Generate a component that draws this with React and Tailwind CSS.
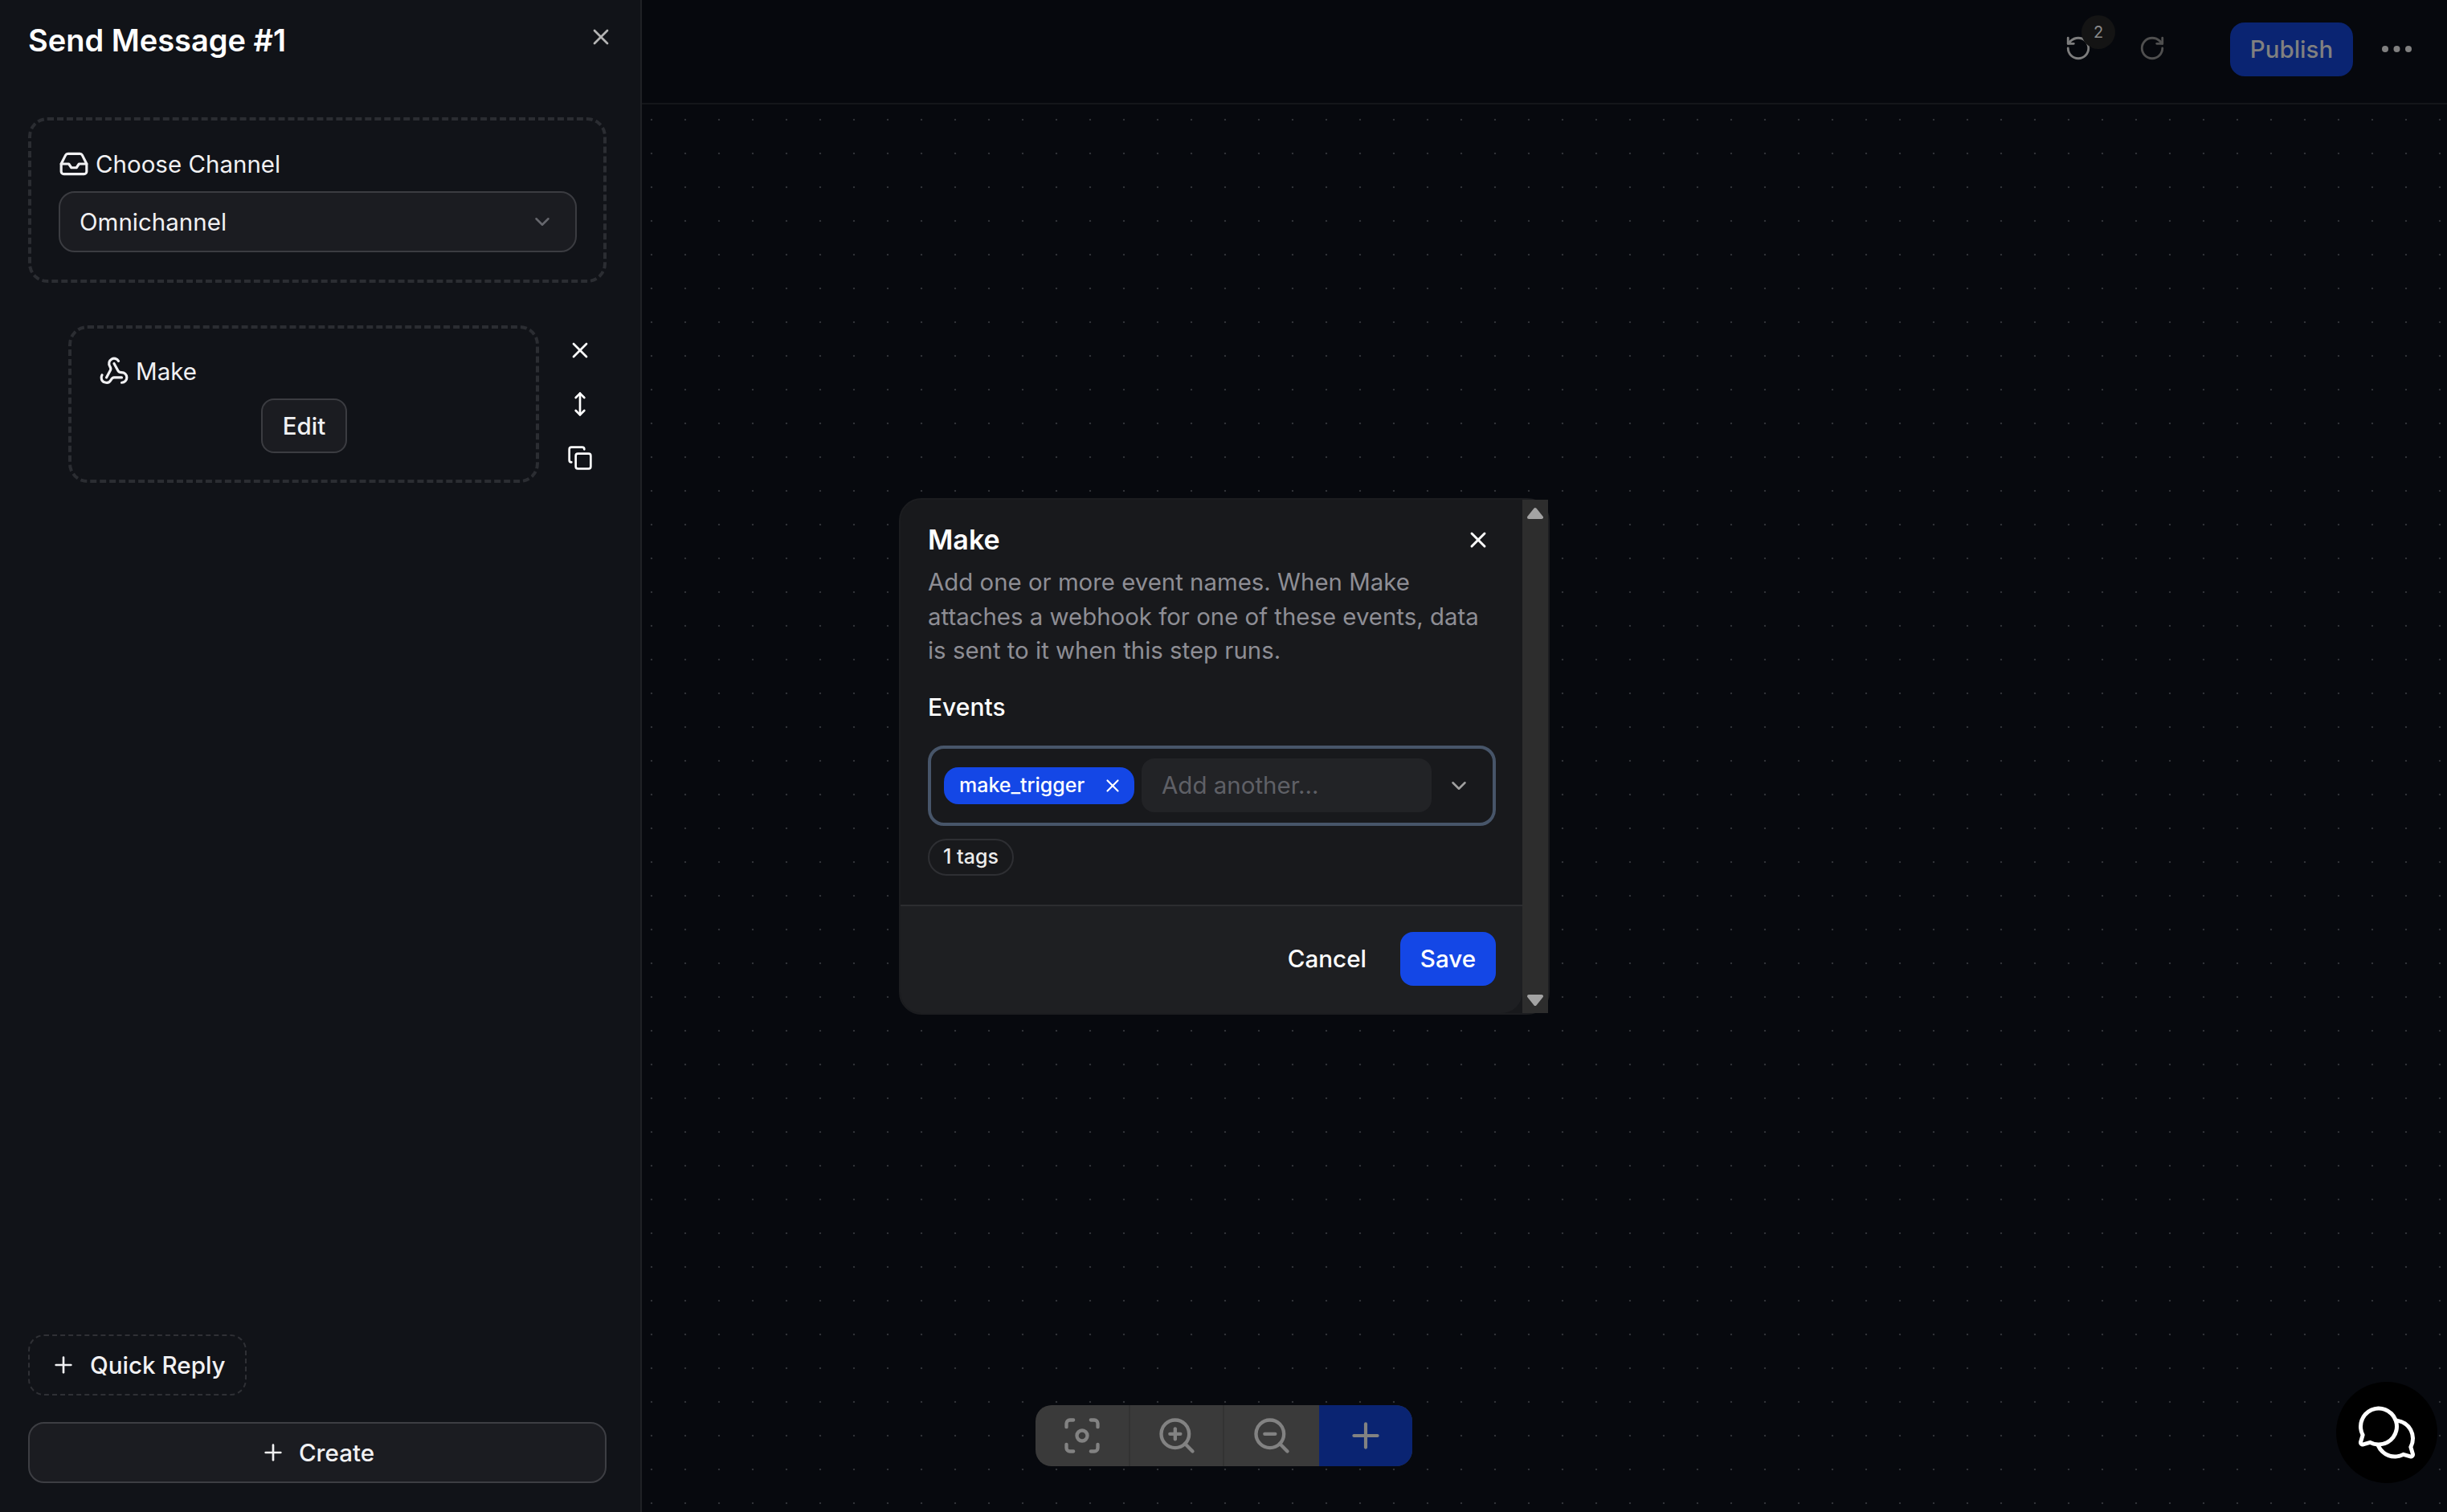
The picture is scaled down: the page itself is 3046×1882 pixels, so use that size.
import { Inbox, ChevronDown, Webhook, X, MoveVertical, Copy, Plus, RotateCcw, RotateCw, Focus, ZoomIn, ZoomOut } from 'lucide-react'
import { PiChatsCircle } from 'react-icons/pi'

function Sidebar() {
  return (
    <aside className="w-[799px] h-full shrink-0 flex flex-col bg-[#111318] border-r-2 border-[#1f2125] pl-[35px] pr-[42px] text-[#f1f1f3]">
      <div className="h-[146px] shrink-0 flex justify-between">
        <h1 className="mt-[28px] text-[38px] leading-[44px] font-semibold text-white">Send Message #1</h1>
        <X size={32} strokeWidth={2} className="mt-[30px] mr-[-9px] text-[#b4b4b4]" />
      </div>

      {/* Channel */}
      <div className="w-[720px] h-[206px] shrink-0 border-4 border-dashed border-[#2b2d32] rounded-[24px] pl-[34px] pr-[33px] pt-[34px]">
        <div className="flex items-center gap-[8px] h-[40px] text-[29.5px] leading-[40px]">
          <Inbox size={38} strokeWidth={2} />
          <span>Choose Channel</span>
        </div>
        <div className="mt-[14px] h-[76px] flex items-center justify-between bg-[#1b1c21] border-2 border-[#3b3c41] rounded-[20px] pl-[24px] pr-[26px] text-[29.5px]">
          <span>Omnichannel</span>
          <ChevronDown size={30} className="text-[#66676d]" />
        </div>
      </div>

      {/* Step */}
      <div className="mt-[53px] flex items-start">
        <div className="ml-[50px] w-[586px] h-[196px] shrink-0 border-4 border-dashed border-[#2b2d32] rounded-[24px] pt-[31px] flex flex-col">
          <div className="pl-[34px] flex items-center gap-[8px] h-[44px] text-[29.5px]">
            <Webhook size={38} strokeWidth={2} />
            <span>Make</span>
          </div>
          <button className="self-center mt-[12px] ml-[1px] w-[107px] h-[68px] bg-[#1b1c21] border-2 border-[#3b3c41] rounded-[16px] text-[29.5px] font-medium">Edit</button>
        </div>
        <div className="ml-[35px] pt-[15px] flex flex-col gap-[35px] text-white">
          <X size={32} />
          <MoveVertical size={32} />
          <Copy size={32} />
        </div>
      </div>

      <div className="mt-auto w-[272px] h-[76px] flex items-center gap-[17px] pl-[26px] border-2 border-dashed border-[#2f3035] rounded-[20px] text-[29.6px] font-medium">
        <Plus size={32} strokeWidth={2} />
        <span>Quick Reply</span>
      </div>
      <button className="mt-[33px] mb-[36px] w-[720px] h-[76px] shrink-0 flex items-center justify-center gap-[16px] bg-[#1b1c21] border-2 border-[#3d3e43] rounded-[20px] text-[29.6px] font-medium">
        <Plus size={32} strokeWidth={2} />
        <span>Create</span>
      </button>
    </aside>
  )
}

function Topbar() {
  return (
    <header className="h-[130px] shrink-0 flex items-start justify-end border-b-2 border-[#14161a] bg-[#06080d]">
      <div className="relative mt-[43px] text-[#7d7d7d]">
        <RotateCcw size={34} strokeWidth={2} />
        <span className="absolute left-[21px] top-[-24px] w-[42px] h-[42px] flex items-center justify-center rounded-full bg-[#141414] text-[20px] text-[#8a8a8a]">2</span>
      </div>
      <RotateCw size={34} strokeWidth={2} className="mt-[43px] ml-[58px] text-[#4f4f4f]" />
      <button className="mt-[28px] ml-[80px] w-[153px] h-[67px] rounded-[18px] bg-[#0a2472] text-[29.5px] font-medium text-[#808080]">Publish</button>
      <svg width="37" height="8" viewBox="0 0 37 8" className="mt-[57px] ml-[36px] mr-[44px] text-[#808080]" fill="currentColor">
        <circle cx="4" cy="4" r="4" />
        <circle cx="18.5" cy="4" r="4" />
        <circle cx="33" cy="4" r="4" />
      </svg>
    </header>
  )
}

function MakeDialog() {
  return (
    <div className="absolute left-[320px] top-[490px] w-[810px] h-[643px] flex border-2 border-[#1c1d20] rounded-[28px] text-white bg-[#18191c]">
      <div className="flex-1 flex flex-col rounded-[26px] overflow-hidden">
        <div className="h-[504px] pl-[34px] pr-[33px] pt-[28px]">
          <div className="flex items-center justify-between h-[44px]">
            <h2 className="text-[34px] font-semibold leading-[44px]">Make</h2>
            <X size={32} strokeWidth={2.2} className="mr-[6px]" />
          </div>
          <p className="mt-[10px] text-[29.4px] leading-[42.5px] text-[#8e8e95]">Add one or more event names. When Make attaches a webhook for one of these events, data is sent to it when this step runs.</p>
          <div className="mt-[28px] text-[30px] leading-[40px] font-medium">Events</div>
          <div className="mt-[28px] w-[707px] h-[100px] flex items-center border-4 border-[#475569] rounded-[20px] pl-[16px]">
            <span className="h-[46px] w-[237px] flex items-center justify-between pl-[19px] pr-[14px] rounded-[18px] bg-[#1447e6] text-[25px] font-medium">
              make_trigger
              <X size={26} strokeWidth={2} />
            </span>
            <div className="ml-[9px] h-[67px] w-[361px] flex items-center pl-[25px] rounded-[16px] bg-[#222326] text-[29.5px] text-[#5f6066]">Add another...</div>
            <ChevronDown size={30} strokeWidth={2} className="ml-[19px] text-[#a0a0a0]" />
          </div>
          <span className="mt-[16px] inline-flex items-center h-[46px] w-[107px] justify-center rounded-full border-2 border-[#2e2f33] text-[25px] font-medium text-[#ececec]">1 tags</span>
        </div>
        <div className="flex-1 flex items-center justify-end gap-[42px] pr-[33px] pb-[3px] border-t-2 border-[#2c2d30] bg-[#1e1f22] text-[29.6px] font-medium">
          <span>Cancel</span>
          <button className="w-[119px] h-[67px] rounded-[16px] bg-[#1447e6]">Save</button>
        </div>
      </div>
      <div className="w-[32px] flex flex-col justify-between items-center pt-[9px] pb-[8px] bg-[#2d2d2d] text-[#a3a3a3]">
        <svg width="20" height="16" viewBox="0 0 20 16" fill="currentColor"><path d="M10 3 L18 13 H2 Z" stroke="currentColor" strokeWidth="4" strokeLinejoin="round" /></svg>
        <svg width="20" height="16" viewBox="0 0 20 16" fill="currentColor"><path d="M10 13 L18 3 H2 Z" stroke="currentColor" strokeWidth="4" strokeLinejoin="round" /></svg>
      </div>
    </div>
  )
}

function Toolbar() {
  return (
    <div className="absolute left-[490px] bottom-[57px] w-[469px] h-[76px] flex rounded-[20px] overflow-hidden bg-[#3a3a3a] text-[#828282]">
      <div className="w-[118px] flex items-center justify-center border-r-2 border-[#333333]"><Focus size={52} strokeWidth={2} /></div>
      <div className="w-[117px] flex items-center justify-center border-r-2 border-[#333333]"><ZoomIn size={52} strokeWidth={2} /></div>
      <div className="w-[118px] flex items-center justify-center"><ZoomOut size={52} strokeWidth={2} /></div>
      <div className="flex-1 flex items-center justify-center bg-[#0a2472]"><Plus size={50} strokeWidth={2} /></div>
    </div>
  )
}

export default function App() {
  return (
    <div className="w-[3046px] h-[1882px] flex overflow-hidden bg-[#07090e] [font-family:Inter,sans-serif]">
      <Sidebar />
      <div className="flex-1 flex flex-col">
        <Topbar />
        <main className="relative flex-1 bg-[#07090e] bg-[radial-gradient(#303237_1px,transparent_1.6px)] bg-[length:42px_42px] bg-[position:-9px_-2px]">
          <MakeDialog />
          <Toolbar />
          <div className="absolute left-[2109px] top-[1590px] w-[126px] h-[126px] flex items-center justify-center rounded-full bg-black text-white">
            <PiChatsCircle size={80} />
          </div>
        </main>
      </div>
    </div>
  )
}
